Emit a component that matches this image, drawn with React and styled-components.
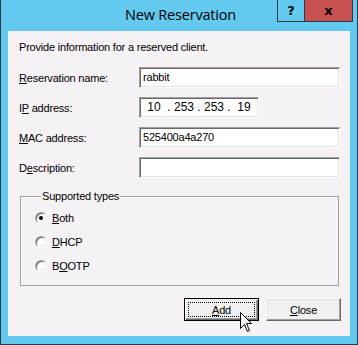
import React from 'react'
import styled, { createGlobalStyle } from 'styled-components'

const Global = createGlobalStyle`
  html, body {
    margin: 0;
    padding: 0;
    background: #ffffff;
  }
  body {
    font-family: "Liberation Sans", Arial, sans-serif;
    font-size: 11px;
    letter-spacing: -0.2px;
    color: #000;
  }
`

const Janela = styled.div`
  position: relative;
  width: 358px;
  height: 345px;
  box-sizing: border-box;
  background: #63c9ef;
  border: 1px solid #2d3b48;
  border-top: none;
  display: flex;
  flex-direction: column;
  padding: 0 7px 8px 7px;
`

const BarraTitulo = styled.div`
  height: 31px;
  display: grid;
  grid-template-columns: 1fr auto 1fr;
  align-items: start;
  margin-right: -3px;
`

const Titulo = styled.div`
  grid-column: 2;
  font-family: "Open Sans", "Noto Sans", sans-serif;
  font-size: 14.5px;
  line-height: 20px;
  padding-top: 5px;
  color: #000;
  letter-spacing: -0.2px;
`

const BotoesJanela = styled.div`
  grid-column: 3;
  justify-self: end;
  display: flex;
  border: 1px solid #2d3b48;
  border-top: none;
  height: 21px;
`

const BotaoJanela = styled.div`
  width: ${(p) => p.largura}px;
  height: 21px;
  background: ${(p) => p.cor};
  display: flex;
  align-items: center;
  justify-content: center;
  font-family: "DejaVu Sans", sans-serif;
  font-weight: bold;
  font-size: 13px;
  letter-spacing: 0;
  & + & {
    border-left: 1px solid #2d3b48;
  }
`

const Cliente = styled.div`
  flex: 1;
  background: #f5f1f5;
  display: flex;
  flex-direction: column;
  padding: 10px 10px 0 11px;
`

const Intro = styled.p`
  margin: 0;
  line-height: 13px;
`

const Campos = styled.div`
  display: flex;
  flex-direction: column;
  gap: 9px;
  margin-top: 13px;
`

const Linha = styled.div`
  display: flex;
  align-items: center;
  height: 21px;
`

const Rotulo = styled.label`
  width: 120px;
`

const Entrada = styled.div`
  width: ${(p) => p.largura}px;
  height: 21px;
  box-sizing: border-box;
  background: #fff;
  border-top: 1px solid #a0a0a0;
  border-left: 1px solid #a0a0a0;
  border-right: 1px solid #ffffff;
  border-bottom: 1px solid #ffffff;
  box-shadow: inset 1px 1px 0 #696969, inset -1px -1px 0 #e3e3e3;
  padding: 0 3px;
  display: flex;
  align-items: center;
  white-space: pre;
  line-height: 13px;
`

const Ip = styled(Entrada)`
  padding-left: 3px;
  font-size: 12px;
  letter-spacing: 0;
`

const Octeto = styled.span`
  width: ${(p) => (p.ponto ? 8 : 22)}px;
  text-align: center;
`

const Grupo = styled.fieldset`
  margin: 12px 0 0 1px;
  width: 319px;
  box-sizing: border-box;
  border: 1px solid #a0a0a0;
  box-shadow: inset 1px 1px 0 #ffffff;
  padding: 3px 0 7px 14px;
  display: flex;
  flex-direction: column;
`

const Legenda = styled.legend`
  padding: 0 1px;
  margin-left: 6px;
  line-height: 13px;
`

const OpcaoRadio = styled.div`
  display: flex;
  align-items: center;
  height: 24px;
  gap: 5px;
`

const Circulo = styled.span`
  width: 12px;
  height: 12px;
  box-sizing: border-box;
  border-radius: 50%;
  background: #fff;
  border: 1px solid;
  border-color: #a0a0a0 #ffffff #ffffff #a0a0a0;
  box-shadow: inset 1px 1px 0 #696969, inset -1px -1px 0 #e3e3e3;
  display: flex;
  align-items: center;
  justify-content: center;
  &::after {
    content: '';
    width: 4px;
    height: 4px;
    border-radius: 50%;
    background: ${(p) => (p.marcado ? '#000' : 'transparent')};
  }
`

const Rodape = styled.div`
  display: flex;
  justify-content: flex-end;
  gap: 7px;
  margin-top: 12px;
  margin-right: -1px;
`

const Botao = styled.div`
  position: relative;
  width: 75px;
  height: 23px;
  box-sizing: border-box;
  background: #f0f0f0;
  border: 1px solid;
  border-color: ${(p) => (p.padrao ? '#000' : '#ffffff #696969 #696969 #ffffff')};
  box-shadow: ${(p) =>
    p.padrao
      ? 'inset 1px 1px 0 #fff, inset -1px -1px 0 #696969, inset -2px -2px 0 #a0a0a0'
      : 'inset -1px -1px 0 #a0a0a0, inset 1px 1px 0 #e3e3e3'};
  display: flex;
  align-items: center;
  justify-content: center;
  &::before {
    content: '';
    position: absolute;
    inset: 3px 3px 3px 3px;
    border: 1px dotted ${(p) => (p.padrao ? '#000' : 'transparent')};
  }
`

const Cursor = styled.svg`
  position: absolute;
  left: 55px;
  top: 13px;
`

const Sub = styled.u`
  text-decoration-thickness: 1px;
  text-underline-offset: 1px;
`

export default function App() {
  const tipos = [
    { id: 'both', antes: '', letra: 'B', depois: 'oth', marcado: true },
    { id: 'dhcp', antes: '', letra: 'D', depois: 'HCP' },
    { id: 'bootp', antes: 'B', letra: 'O', depois: 'OTP' },
  ]
  const octetos = ['10', '253', '253', '19']

  return (
    <>
      <Global />
      <Janela>
        <BarraTitulo>
          <Titulo>New Reservation</Titulo>
          <BotoesJanela>
            <BotaoJanela largura={26} cor="#63c9ef">?</BotaoJanela>
            <BotaoJanela largura={47} cor="#c75050">x</BotaoJanela>
          </BotoesJanela>
        </BarraTitulo>
        <Cliente>
          <Intro>Provide information for a reserved client.</Intro>
          <Campos>
            <Linha>
              <Rotulo><Sub>R</Sub>eservation name:</Rotulo>
              <Entrada largura={201}>rabbit</Entrada>
            </Linha>
            <Linha>
              <Rotulo>I<Sub>P</Sub> address:</Rotulo>
              <Ip largura={120}>
                {octetos.map((o, i) => (
                  <React.Fragment key={i}>
                    {i > 0 && <Octeto ponto>.</Octeto>}
                    <Octeto>{o}</Octeto>
                  </React.Fragment>
                ))}
              </Ip>
            </Linha>
            <Linha>
              <Rotulo><Sub>M</Sub>AC address:</Rotulo>
              <Entrada largura={201}>525400a4a270</Entrada>
            </Linha>
            <Linha>
              <Rotulo>D<Sub>e</Sub>scription:</Rotulo>
              <Entrada largura={201}></Entrada>
            </Linha>
          </Campos>
          <Grupo>
            <Legenda>Supported types</Legenda>
            {tipos.map((t) => (
              <OpcaoRadio key={t.id}>
                <Circulo marcado={t.marcado} />
                <span>{t.antes}<Sub>{t.letra}</Sub>{t.depois}</span>
              </OpcaoRadio>
            ))}
          </Grupo>
          <Rodape>
            <Botao padrao>
              <span><Sub>A</Sub>dd</span>
              <Cursor width="13" height="21" viewBox="0 0 13 21">
                <path
                  d="M0.5 0.5 L0.5 16.5 L4.5 12.5 L7.5 19.5 L9.5 18.5 L6.5 11.5 L11.5 11.5 Z"
                  fill="#fff"
                  stroke="#000"
                  strokeWidth="1"
                />
              </Cursor>
            </Botao>
            <Botao>
              <span><Sub>C</Sub>lose</span>
            </Botao>
          </Rodape>
        </Cliente>
      </Janela>
    </>
  )
}
